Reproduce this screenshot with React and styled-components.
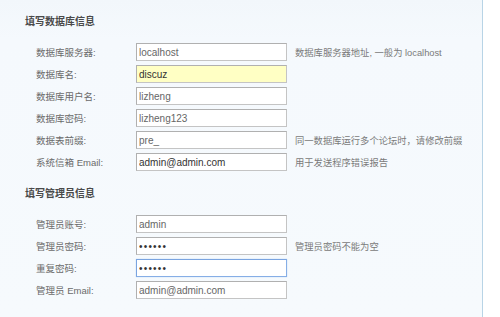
import React from "react";
import styled, { createGlobalStyle } from "styled-components";

const GlobalStyle = createGlobalStyle`
  html, body {
    margin: 0;
    padding: 0;
    background: #ffffff;
  }
  body {
    font-family: "Liberation Sans", "Noto Sans CJK SC", sans-serif;
  }
`;

const Page = styled.div`
  width: 500px;
  height: 317px;
  background: #ffffff;
  overflow: hidden;
`;

const Panel = styled.div`
  box-sizing: border-box;
  width: 483px;
  height: 317px;
  padding: 15px 0 0 25px;
  background: linear-gradient(#f2f7fb, #f5f9fd 40px, #f6fafd);
  border-right: 1px solid #b8d4e6;
`;

const Section = styled.div`
  & + & {
    margin-top: 14px;
  }
`;

const Heading = styled.div`
  height: 14px;
  line-height: 14px;
  margin-bottom: 12px;
  font-size: 10px;
  font-weight: bold;
  color: #4a4a4a;
`;

const Row = styled.div`
  display: grid;
  grid-template-columns: 100px 151px auto;
  align-items: center;
  height: 22px;
  padding-left: 11px;
`;

const Label = styled.label`
  font-size: 9.5px;
  color: #6a6a6a;
  white-space: nowrap;
`;

const Field = styled.input`
  box-sizing: border-box;
  width: 151px;
  height: 18px;
  margin: 0;
  padding: 0 2px;
  font-family: "Liberation Sans", "Noto Sans CJK SC", sans-serif;
  font-size: 10px;
  letter-spacing: ${(p) => (p.type === "password" ? "1.2px" : "0")};
  color: ${(p) => (p.$dark ? "#333" : "#666")};
  background: ${(p) => (p.$highlight ? "#ffffc4" : "#ffffff")};
  border: 1px solid ${(p) => (p.$focused ? "#86aee6" : "#c4c4c4")};
  border-top-color: ${(p) => (p.$focused ? "#7aa4e0" : "#b0b0b0")};
  border-left-color: ${(p) => (p.$focused ? "#7aa4e0" : "#b0b0b0")};
  outline: none;
  box-shadow: ${(p) => (p.$focused ? "0 0 1px #a9c6f0" : "none")};
`;

const Hint = styled.span`
  margin-left: 8px;
  font-size: 9.3px;
  color: #7a7a7a;
  white-space: nowrap;
`;

const dbRows = [
  { label: "数据库服务器:", value: "localhost", hint: "数据库服务器地址, 一般为 localhost" },
  { label: "数据库名:", value: "discuz", highlight: true, dark: true },
  { label: "数据库用户名:", value: "lizheng" },
  { label: "数据库密码:", value: "lizheng123" },
  { label: "数据表前缀:", value: "pre_", hint: "同一数据库运行多个论坛时，请修改前缀" },
  { label: "系统信箱 Email:", value: "admin@admin.com", hint: "用于发送程序错误报告", dark: true },
];

const adminRows = [
  { label: "管理员账号:", value: "admin" },
  { label: "管理员密码:", value: "123456", type: "password", hint: "管理员密码不能为空", dark: true },
  { label: "重复密码:", value: "123456", type: "password", focused: true, dark: true },
  { label: "管理员 Email:", value: "admin@admin.com" },
];

function FormRow({ row }) {
  return (
    <Row>
      <Label>{row.label}</Label>
      <Field
        type={row.type || "text"}
        defaultValue={row.value}
        $highlight={row.highlight}
        $focused={row.focused}
        $dark={row.dark}
        autoFocus={row.focused}
      />
      {row.hint ? <Hint>{row.hint}</Hint> : <span />}
    </Row>
  );
}

export default function App() {
  return (
    <Page>
      <GlobalStyle />
      <Panel>
        <Section>
          <Heading>填写数据库信息</Heading>
          {dbRows.map((r) => (
            <FormRow key={r.label} row={r} />
          ))}
        </Section>
        <Section>
          <Heading>填写管理员信息</Heading>
          {adminRows.map((r) => (
            <FormRow key={r.label} row={r} />
          ))}
        </Section>
      </Panel>
    </Page>
  );
}
